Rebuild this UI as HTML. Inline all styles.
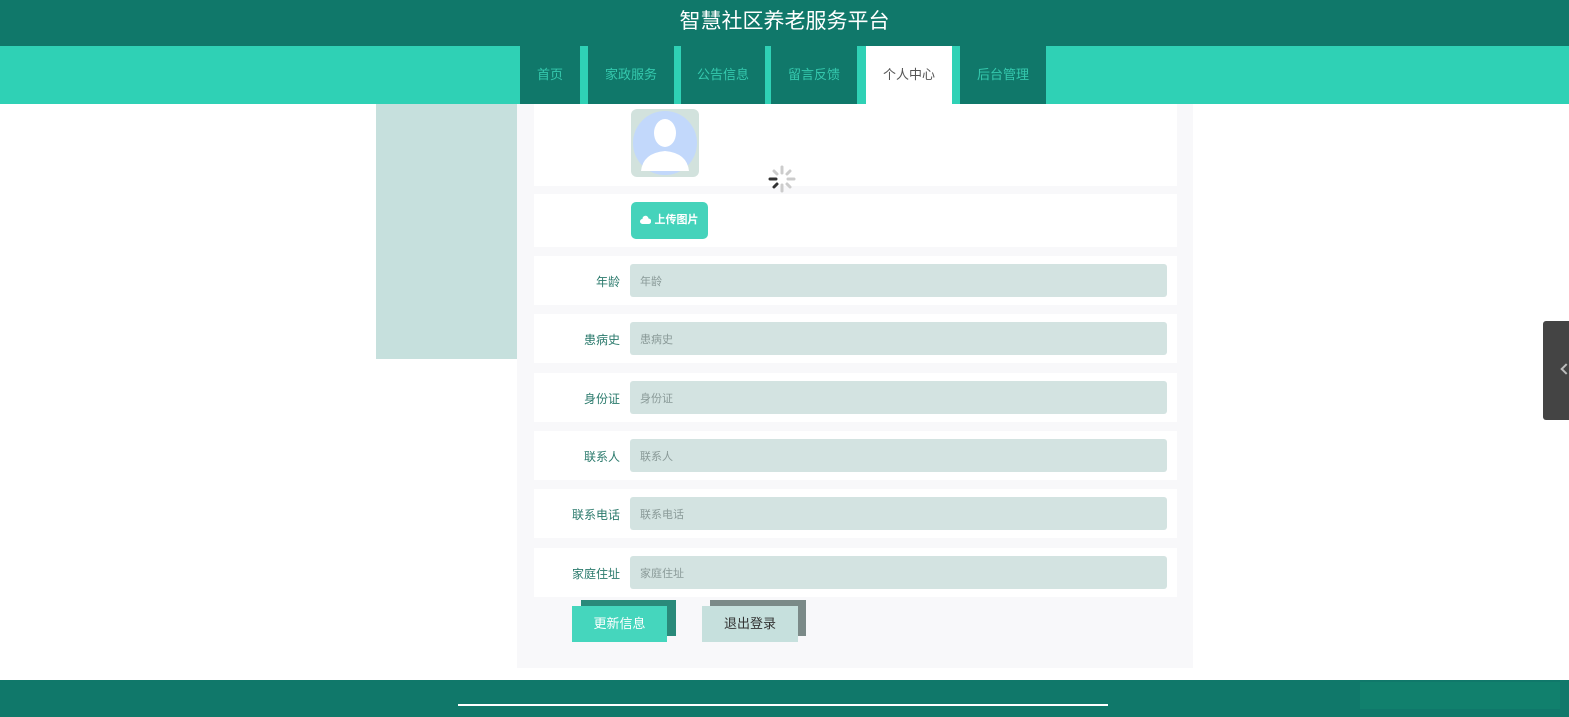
<!DOCTYPE html>
<html><head><meta charset="utf-8"><style>
*{margin:0;padding:0;box-sizing:border-box}
body{width:1569px;height:717px;overflow:hidden;background:#fff;font-family:"Liberation Sans","Noto Sans CJK SC",sans-serif;position:relative}
.a{position:absolute}
.hdr{left:0;top:0;width:1569px;height:46px;background:#10786a;color:#fff;font-size:21px;text-align:center;line-height:44px}
.nav{left:0;top:46px;width:1569px;height:58px;background:#2fd1b5}
.tab{top:46px;height:58px;background:#10786a;color:#35c9ae;font-size:13px;text-align:center;line-height:58px}
.tab.on{background:#fff;color:#555}
.side{left:376px;top:104px;width:141px;height:255px;background:#c6e0dd}
.main{left:517px;top:104px;width:676px;height:564px;background:#f8f8fa}
.row{left:534px;width:643px;background:#fff}
.lab{left:534px;width:86px;text-align:right;font-size:12px;color:#2b7a6c}
.inp{left:630px;width:537px;height:33px;background:#d3e3e1;border-radius:3px;font-size:11px;color:#8a9a98;padding-left:10px;line-height:37px}
.foot{left:0;top:680px;width:1569px;height:37px;background:#10786a}
</style></head><body>
<div class="a hdr">智慧社区养老服务平台</div>
<div class="a nav"></div>
<div class="a tab" style="left:520px;width:60px">首页</div>
<div class="a tab" style="left:588px;width:86px">家政服务</div>
<div class="a tab" style="left:681px;width:84px">公告信息</div>
<div class="a tab" style="left:771px;width:86px">留言反馈</div>
<div class="a tab on" style="left:866px;width:86px">个人中心</div>
<div class="a tab" style="left:960px;width:86px">后台管理</div>
<div class="a side"></div>
<div class="a main"></div>
<div class="a row" style="top:104px;height:82px"></div>
<div class="a" style="left:631px;top:109px;width:68px;height:68px;background:#d2e2dd;border-radius:6px;overflow:hidden">
<svg width="68" height="68"><circle cx="34" cy="34" r="32" fill="#c2d8fb"/><ellipse cx="34" cy="24" rx="11" ry="14" fill="#fff"/><path d="M10 62 Q12 44 34 42 Q56 44 58 62 Z" fill="#fff"/></svg></div>
<svg class="a" style="left:767px;top:164px" width="30" height="30" viewBox="0 0 30 30"><g stroke-width="3" stroke-linecap="round"><line x1="15" y1="3" x2="15" y2="9" stroke="#ccc"/><line x1="23" y1="7" x2="20" y2="10" stroke="#ccc"/><line x1="27" y1="15" x2="21" y2="15" stroke="#ccc"/><line x1="23" y1="23" x2="20" y2="20" stroke="#ccc"/><line x1="15" y1="27" x2="15" y2="21" stroke="#ccc"/><line x1="7" y1="23" x2="10" y2="20" stroke="#333"/><line x1="3" y1="15" x2="9" y2="15" stroke="#333"/><line x1="7" y1="7" x2="10" y2="10" stroke="#ccc"/></g></svg>
<div class="a row" style="top:194px;height:53px"></div>
<div class="a" style="left:631px;top:202px;width:77px;height:37px;background:#45d3bb;border-radius:5px;color:#fff;font-size:11px;line-height:37px;text-align:center;font-weight:bold"><svg width="11" height="9" viewBox="0 0 11 9" style="vertical-align:-1px"><path d="M2.5 9 A2.5 2.5 0 0 1 2.5 4 A3 3 0 0 1 8.5 3.5 A2.7 2.7 0 0 1 8.5 9 Z" fill="#fff"/></svg> 上传图片</div>
<div class="a row" style="top:256px;height:49px"></div><div class="a lab" style="top:273px">年龄</div><div class="a inp" style="top:264px">年龄</div>
<div class="a row" style="top:314px;height:49px"></div><div class="a lab" style="top:331px">患病史</div><div class="a inp" style="top:322px">患病史</div>
<div class="a row" style="top:373px;height:49px"></div><div class="a lab" style="top:390px">身份证</div><div class="a inp" style="top:381px">身份证</div>
<div class="a row" style="top:431px;height:49px"></div><div class="a lab" style="top:448px">联系人</div><div class="a inp" style="top:439px">联系人</div>
<div class="a row" style="top:489px;height:49px"></div><div class="a lab" style="top:506px">联系电话</div><div class="a inp" style="top:497px">联系电话</div>
<div class="a row" style="top:548px;height:49px"></div><div class="a lab" style="top:565px">家庭住址</div><div class="a inp" style="top:556px">家庭住址</div>
<div class="a" style="left:581px;top:600px;width:95px;height:36px;background:#2a8a7a"></div>
<div class="a" style="left:572px;top:606px;width:95px;height:36px;background:#45d6bd;color:#fff;font-size:13px;text-align:center;line-height:36px">更新信息</div>
<div class="a" style="left:710px;top:600px;width:96px;height:36px;background:#7b8a88"></div>
<div class="a" style="left:702px;top:606px;width:96px;height:36px;background:#c6e0dd;color:#333;font-size:13px;text-align:center;line-height:36px">退出登录</div>
<div class="a foot"></div>
<div class="a" style="left:1360px;top:682px;width:200px;height:27px;background:#11806d"></div>
<div class="a" style="left:458px;top:704px;width:650px;height:2px;background:#fff"></div>
<div class="a" style="left:1543px;top:321px;width:26px;height:99px;background:#444;border-radius:3px 0 0 3px"></div>
<div class="a" style="left:1562px;top:365px;width:8px;height:8px;border-left:2px solid #bbb;border-bottom:2px solid #bbb;transform:rotate(45deg)"></div>
</body></html>
